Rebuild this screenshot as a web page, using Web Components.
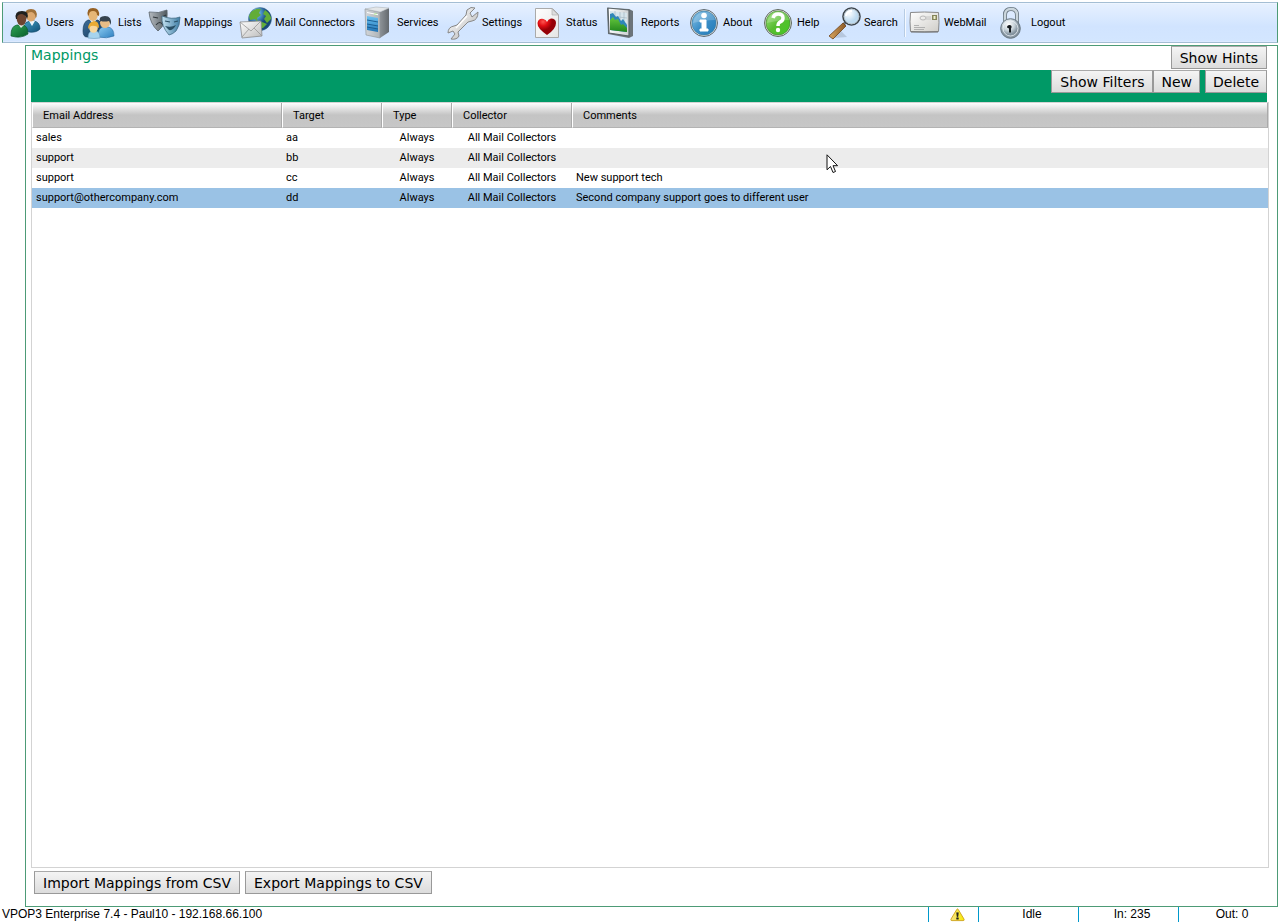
<!DOCTYPE html>
<html lang="en">
<head>
<meta charset="utf-8">
<title>VPOP3 - Mappings</title>
<style>
html, body { margin: 0; height: 100%; background: #fff; color: #000; font-family: Roboto, sans-serif; font-size: 11px; }
</style>
</head>
<body>
<vpop-app></vpop-app>

<script>
const ICONS = {
  users: `<defs><linearGradient id="a" x1="0" y1="0" x2="1" y2="1"><stop offset="0" stop-color="#3f9fc4"/><stop offset="1" stop-color="#114f76"/></linearGradient>
<linearGradient id="b" x1="0" y1="0" x2="1" y2="1"><stop offset="0" stop-color="#2fa455"/><stop offset="1" stop-color="#08602b"/></linearGradient></defs>
<path d="M13 23v-5q1-3 6-4h4q6 1 6 8-4 4-11 3z" fill="url(#a)" stroke="#164e6b" stroke-width=".7"/>
<path d="M18 14l3 5 3-5z" fill="#eef6fa"/>
<ellipse cx="20" cy="8.500" rx="5" ry="6" fill="#dda970"/>
<path d="M14.500 9Q13 2 20 2t5.500 8l-1 1q0-5-4-6-4 0-5 3z" fill="#a0713a"/>
<path d="M0 28q0-9 6-10h6q5 1 5 9-7 5-17 2z" fill="url(#b)" stroke="#0b572b" stroke-width=".7"/>
<path d="M7 17l3 4 4-4z" fill="#e2ece5"/>
<ellipse cx="10.500" cy="12" rx="4.800" ry="6.500" fill="#6d4430"/>
<path d="M5 12Q3 4 11 4t5 8q-1-4-5-5-5 0-5 5z" fill="#20201f"/>`,
  lists: `<defs><linearGradient id="a" x1="0" y1="0" x2="1" y2="1"><stop offset="0" stop-color="#3d6f9d"/><stop offset="1" stop-color="#153858"/></linearGradient>
<linearGradient id="b" x1="0" y1="0" x2="1" y2="1"><stop offset="0" stop-color="#8bcbf2"/><stop offset="1" stop-color="#2e7fc0"/></linearGradient></defs>
<path d="M0 24q0-9 5-11h10q4 2 4 8l-6 9H4q-4 0-4-6z" fill="url(#a)" stroke="#153553" stroke-width=".6"/>
<path d="M6 12l4 5 4-5z" fill="#e9eef2"/><ellipse cx="10" cy="8" rx="4.800" ry="6" fill="#e6b676"/>
<path d="M5 9Q3 1 10 1t6 8l-2-1q0-4-4-4-4 0-4 4z" fill="#956023"/>
<path d="M15 29q0-8 5-9h5q6 1 6 9-7 3-16 1z" fill="url(#b)" stroke="#286a9f" stroke-width=".6"/>
<ellipse cx="22" cy="15.500" rx="5" ry="5.500" fill="#e8bd86"/>
<path d="M17 15Q15 9 22 9t6 9l-2-4q-5 1-8 0z" fill="#36434e"/>
<path d="M5 31q0-6 4-7h4q4 1 4 7-6 1-12 0z" fill="#a6d3ee" stroke="#6a9bbd" stroke-width=".6"/>
<ellipse cx="10.500" cy="21" rx="4.300" ry="4.800" fill="#f7d69c"/>
<path d="M5 22q0-7 6-8 5 0 5 7-4-3-8-2z" fill="#e9ab35"/>`,
  mappings: `<defs><linearGradient id="a" x1="0" x2="1"><stop offset="0" stop-color="#b5babf"/><stop offset="1" stop-color="#4f595f"/></linearGradient>
<linearGradient id="b" x1="0" x2="1"><stop offset="0" stop-color="#c4e2f1"/><stop offset="1" stop-color="#3f7da5"/></linearGradient></defs>
<path d="M0 5q10 2 18-2 1 8-2 12-3 6-7 9-8-7-9-19z" fill="url(#a)" stroke="#596268" stroke-width=".8"/>
<path d="M4 10l5 1m4-1l4-2M7 18q4-5 7 0" fill="none" stroke="#30373b" stroke-width="1.200"/>
<path d="M13 9q10 4 18 1 0 9-4 14-3 3-7 4-8-9-7-19z" fill="url(#b)" stroke="#426b83" stroke-width=".8"/>
<path d="M16 14l5 1m4 0l4-1" fill="none" stroke="#294e64" stroke-width="1.200"/><path d="M16 19q6 2 11-1-3 6-7 5z" fill="#294e64"/>`,
  mail: `<defs><radialGradient id="a" cx=".3" cy=".25"><stop offset="0" stop-color="#b6e0ff"/><stop offset=".5" stop-color="#4d94cc"/><stop offset="1" stop-color="#174778"/></radialGradient>
<linearGradient id="b" x1="0" y1="0" x2="1" y2="1"><stop offset="0" stop-color="#fff"/><stop offset="1" stop-color="#bcbcbc"/></linearGradient></defs>
<circle cx="20" cy="12" r="11.500" fill="url(#a)" stroke="#376489" stroke-width=".5"/>
<path d="M11 5q5-4 10-3l-2 4 2 2-4 3 1 5-3-4-5 1-1-4zM25 3q6 4 6 9l-4 4-3-4 2-3-3-2zM17 16l5-1 5 2-4 4q-4 1-6-1z" fill="#62ad38"/>
<path d="M0 15l21-1 1 15-20 2z" fill="url(#b)" stroke="#8c8c8c" stroke-width=".8"/>
<path d="M0 15l11 9 10-10M2 30l7-8m13 7l-8-8" fill="none" stroke="#979797" stroke-width=".8"/>`,
  services: `<defs><linearGradient id="a" x1="0" x2="1"><stop offset="0" stop-color="#d3d6d9"/><stop offset="1" stop-color="#aeb3b7"/></linearGradient>
<linearGradient id="b" y1="0" y2="1" x1="0" x2="0"><stop offset="0" stop-color="#6cc4f4"/><stop offset="1" stop-color="#1f72b4"/></linearGradient>
<linearGradient id="c" x1="0" x2="1"><stop offset="0" stop-color="#8d9398"/><stop offset="1" stop-color="#63696e"/></linearGradient></defs>
<path d="M3 2l15 3v26L4 28z" fill="url(#a)" stroke="#8a9094" stroke-width=".6"/><path d="M18 5l9-4v24l-9 6z" fill="url(#c)"/><path d="M3 2l11-2 13 1-9 4z" fill="#e4e7e9" stroke="#a5aaae" stroke-width=".5"/>
<path d="M5 9l11 2v14L5 23z" fill="url(#b)"/><path d="M5 13l11 2M5 17l11 2M5 20l11 2" stroke="#15578c" stroke-width=".9"/><path d="M12 7l3 .6" stroke="#87de59" stroke-width="1.500"/><path d="M5 5.500l11 2.200" stroke="#fff" stroke-width="1"/>`,
  settings: `<defs><linearGradient id="a" x1="0" y1="0" x2="1" y2="1"><stop offset="0" stop-color="#fff"/><stop offset=".5" stop-color="#ddd"/><stop offset="1" stop-color="#a5a5a5"/></linearGradient></defs>
<path d="M20 3q4-4 8-2l-5 5 2 4 6-5q0 8-6 9l-4 1-10 10 1 4q-2 4-8 3l4-5-2-3-5 2q0-6 6-7l3-1 9-10z" fill="url(#a)" stroke="#888" stroke-linejoin="round"/><path d="M20 9L9 21" stroke="#fff" stroke-width="1.500"/>`,
  status: `<defs><linearGradient id="p" x1="0" y1="0" x2="1" y2="1"><stop offset="0" stop-color="#fff"/><stop offset="1" stop-color="#e5e5e5"/></linearGradient><radialGradient id="h" cx=".3" cy=".2"><stop offset="0" stop-color="#ff5650"/><stop offset=".5" stop-color="#e10d13"/><stop offset="1" stop-color="#960006"/></radialGradient></defs>
<path d="M4.500 1.500h17l6 6v23h-23z" fill="url(#p)" stroke="#aaa"/><path d="M21 2v6h6z" fill="#ddd" stroke="#aaa" stroke-width=".6"/>
<path d="M16 28Q6 21 6.500 16q1-5 6-4 3 1 3.500 3 1-3 4-3.500 5 0 5 4.500 0 6-9 12z" fill="url(#h)"/>`,
  reports: `<defs><linearGradient id="a" x1="0" x2="1"><stop offset="0" stop-color="#fff"/><stop offset="1" stop-color="#ccd0d3"/></linearGradient><linearGradient id="g" x1="0" y1="0" x2="0" y2="1"><stop offset="0" stop-color="#65c73d"/><stop offset="1" stop-color="#21861d"/></linearGradient></defs>
<path d="M1 1l22 1 4 2v25l-4 2L2 27z" fill="#6c747a"/><path d="M2 1l21 2v26L3 26z" fill="url(#a)" stroke="#5c6468" stroke-width="1.200"/>
<path d="M4 4l17 2v19L4 23z" fill="#d5e4ec"/><path d="M9 4v19M14 5v19M18 5v20M4 9l17 2M4 15l17 2" stroke="#9db0bc" stroke-width=".6"/>
<path d="M4 7l3-1 3 4 2-1 3 5 2-2 4 6v7L4 23z" fill="#2f86b8"/><path d="M4 13l3-3 2 3 3-1 3 6 2-1 4 4v4L4 23z" fill="url(#g)"/>`,
  about: `<defs><linearGradient id="a" x1="0" y1="0" x2="1" y2="1"><stop offset="0" stop-color="#8fc8ea"/><stop offset=".5" stop-color="#3c8fc8"/><stop offset="1" stop-color="#237bb9"/></linearGradient></defs>
<circle cx="16" cy="16" r="13.500" fill="#d8dddf" stroke="#606b72"/><circle cx="16" cy="16" r="12" fill="url(#a)" stroke="#38779e" stroke-width=".6"/><path d="M5 16q2-10 11-11t11 8q-10 0-22 3z" fill="#fff" opacity=".2"/>
<circle cx="16" cy="8.500" r="2.800" fill="#fff"/><path d="M12 13h6v9h2v2h-8v-2h2v-7h-2z" fill="#fff" stroke="#fff"/>`,
  help: `<defs><linearGradient id="a" x1="0" y1="0" x2="1" y2="1"><stop offset="0" stop-color="#a5e382"/><stop offset=".5" stop-color="#57bd31"/><stop offset="1" stop-color="#44ca22"/></linearGradient></defs>
<circle cx="16" cy="16" r="13.500" fill="#dbe0d8" stroke="#606960"/><circle cx="16" cy="16" r="12" fill="url(#a)" stroke="#427f32" stroke-width=".6"/><path d="M5 16q2-10 11-11t11 8q-10 0-22 3z" fill="#fff" opacity=".2"/>
<path d="M11 11q1-4 5-4 5 0 5 4 0 3-3 4-2 1-2 4" fill="none" stroke="#fff" stroke-width="3.500"/><circle cx="16" cy="23" r="2.200" fill="#fff"/>`,
  search: `<defs><radialGradient id="a" cx=".35" cy=".3"><stop offset="0" stop-color="#fff"/><stop offset="1" stop-color="#bddaf0"/></radialGradient><linearGradient id="h"><stop offset="0" stop-color="#d9a660"/><stop offset="1" stop-color="#8a5824"/></linearGradient></defs>
<path d="M5 31l13-1-6-6z" fill="#8c9bad" opacity=".4"/><path d="M18 14l-4 4" stroke="#777" stroke-width="3"/><path d="M14 16l3 3L4 32l-4-3z" fill="url(#h)" stroke="#6f4219" stroke-width=".8"/>
<circle cx="22.500" cy="9.500" r="8.500" fill="url(#a)" stroke="#3b434a" stroke-width="1.600"/><circle cx="22.500" cy="9.500" r="7.400" fill="none" stroke="#b5c0c8"/><path d="M17 9q1-5 6-5" fill="none" stroke="#fff" stroke-width="2"/>`,
  webmail: `<defs><linearGradient id="a" x1="0" y1="0" x2="1" y2="1"><stop offset="0" stop-color="#fff"/><stop offset="1" stop-color="#cfcdc8"/></linearGradient></defs>
<path d="M1.500 5.500q14-1 28 0 1 10 0 19-14 1-28 0-1-10 0-19z" fill="url(#a)" stroke="#888"/><path d="M2 25h27" stroke="#6f6f6f"/>
<ellipse cx="14" cy="11" rx="3" ry="2" fill="none" stroke="#aaa" stroke-width=".8"/><path d="M17 10h5m-5 2h5" stroke="#bbb" stroke-width=".8"/><path d="M23 8h5v5h-5z" fill="#85855a"/><path d="M24.500 9h2v3h-2z" fill="#efefd0"/><path d="M5 18.500h5m-5 2h11m-11 2h10" stroke="#aaa" stroke-width=".9"/>`,
  logout: `<defs><radialGradient id="a" cx=".4" cy=".3"><stop offset="0" stop-color="#fff"/><stop offset=".6" stop-color="#c8d3da"/><stop offset="1" stop-color="#84939f"/></radialGradient></defs>
<path d="M9 18V8q0-6 6-6t6 6v10" fill="none" stroke="#687681" stroke-width="4"/><path d="M9 17V8q0-6 6-6t6 6v9" fill="none" stroke="#cbd6dd" stroke-width="2.400"/>
<circle cx="14.500" cy="21.500" r="9.800" fill="url(#a)" stroke="#6a7883"/><circle cx="14.500" cy="21.500" r="7.500" fill="none" stroke="#eef3f7" stroke-width=".8"/><path d="M11 20.500q0-2.500 2.500-2.500t2 2.500l-.5 1v4h-2v-4z" fill="#14181c"/>`,
  warning: `<defs><linearGradient id="a"><stop offset="0" stop-color="#f6e28a"/><stop offset="1" stop-color="#f8ec00"/></linearGradient></defs>
<path d="M16 4q1 0 2 2l12 20q1 3-2 3H4q-3 0-2-3L14 6q1-2 2-2z" fill="url(#a)" stroke="#cfa41e" stroke-width="2"/><path d="M14 12h4l-1 9h-2zM14 23h4v3h-4z" fill="#222" stroke="#222"/>`
};

class VpopIcon extends HTMLElement {
  connectedCallback() {
    this.attachShadow({ mode: 'open' }).innerHTML = `
      <style>:host { display: block; flex: none; width: var(--icon-size, 32px); height: var(--icon-size, 32px); } svg { display: block; width: 100%; height: 100%; overflow: visible; }</style>
      <svg viewBox="0 0 32 32" aria-hidden="true">${ICONS[this.getAttribute('name')]}</svg>`;
  }
}
customElements.define('vpop-icon', VpopIcon);

class VpopTool extends HTMLElement {
  connectedCallback() {
    this.attachShadow({ mode: 'open' }).innerHTML = `
      <style>
        :host { display: block; flex: none; }
        button { display: flex; align-items: center; gap: 3px; margin: 0; padding: 0; border: 0; background: none; color: #000; font: inherit; line-height: 16px; text-align: left; white-space: nowrap; }
        span { width: var(--label); }
      </style>
      <button type="button"><vpop-icon name="${this.getAttribute('icon')}"></vpop-icon><span><slot></slot></span></button>`;
  }
}
customElements.define('vpop-tool', VpopTool);

class VpopToolbar extends HTMLElement {
  connectedCallback() {
    this.attachShadow({ mode: 'open' }).innerHTML = `
      <style>
        :host { display: block; }
        nav { display: flex; align-items: center; gap: 10px; height: 39px; padding-left: 8px; border: 1px solid #a4bed4; border-left-color: #4d9b76; border-right-color: #4d9b76; background: linear-gradient(#e7f1ff, #d1e4ff 60%, #d3e6ff); box-shadow: inset 0 1px #eef5ff, inset 0 -1px #dceaff; }
      </style>
      <nav aria-label="Main"><slot></slot></nav>`;
  }
}
customElements.define('vpop-toolbar', VpopToolbar);

class VpopButton extends HTMLElement {
  connectedCallback() {
    this.attachShadow({ mode: 'open' }).innerHTML = `
      <style>
        :host { display: block; }
        button { display: block; box-sizing: border-box; height: 23px; margin: 0; padding: 0 8px; border: 1px solid #999; border-top-color: #a9a9a9; border-radius: 0; background: linear-gradient(#f4f4f4, #dcdcdc); color: #000; font: 14px/20px "DejaVu Sans", sans-serif; white-space: nowrap; }
        :host([compact]) button { padding: 0 7px; }
      </style>
      <button type="button"><slot></slot></button>`;
  }
}
customElements.define('vpop-button', VpopButton);

class MappingGrid extends HTMLElement {
  connectedCallback() {
    const rows = [
      ['sales', 'aa', 'Always', 'All Mail Collectors', ''],
      ['support', 'bb', 'Always', 'All Mail Collectors', ''],
      ['support', 'cc', 'Always', 'All Mail Collectors', 'New support tech'],
      ['support@othercompany.com', 'dd', 'Always', 'All Mail Collectors', 'Second company support goes to different user']
    ];
    this.attachShadow({ mode: 'open' }).innerHTML = `
      <style>
        :host { display: block; box-sizing: border-box; border: 1px solid #d3d3d3; }
        table { width: 100%; border-collapse: separate; border-spacing: 0; table-layout: fixed; line-height: 16px; }
        th { box-sizing: border-box; height: 25px; padding: 2px 0 0 10px; border-left: 1px solid #fff; border-right: 1px solid #aaa; border-bottom: 1px solid #b3b3b3; background: linear-gradient(#fdfdfd, #c4c4c4 50%, #c7c7c7); font-weight: normal; text-align: left; }
        td { height: 20px; box-sizing: border-box; padding: 0 4px; white-space: nowrap; }
        td:nth-child(3), td:nth-child(4) { text-align: center; }
        tr:nth-child(even) td { background: #ececec; }
        tr[aria-selected] td { background: #9ac2e5; }
      </style>
      <table>
        <colgroup><col style="width:250px"><col style="width:100px"><col style="width:70px"><col style="width:120px"><col></colgroup>
        <thead><tr><th>Email Address</th><th>Target</th><th>Type</th><th>Collector</th><th>Comments</th></tr></thead>
        <tbody>${rows.map((r, i) => `<tr${i === 3 ? ' aria-selected="true"' : ''}>${r.map(c => `<td>${c}</td>`).join('')}</tr>`).join('')}</tbody>
      </table>`;
  }
}
customElements.define('mapping-grid', MappingGrid);

class VpopPanel extends HTMLElement {
  connectedCallback() {
    this.attachShadow({ mode: 'open' }).innerHTML = `
      <style>
        :host { display: flex; flex-direction: column; box-sizing: border-box; border: 1px solid #4d9b76; padding: 0 8px 0 5px; }
        header { display: flex; justify-content: space-between; height: 24px; padding-right: 2px; }
        h1 { margin: 0; color: #009966; font: 14px/18px "DejaVu Sans", sans-serif; }
        .bar { display: flex; justify-content: flex-end; align-items: flex-start; height: 32px; margin-right: 2px; background: #009966; }
        .bar vpop-button:last-child { margin-left: 5px; }
        mapping-grid { flex: 1; }
        footer { display: flex; gap: 5px; padding: 3px 3px 12px; }
      </style>
      <header><h1>Mappings</h1><vpop-button>Show Hints</vpop-button></header>
      <div class="bar"><vpop-button>Show Filters</vpop-button><vpop-button compact>New</vpop-button><vpop-button compact>Delete</vpop-button></div>
      <mapping-grid></mapping-grid>
      <footer><vpop-button>Import Mappings from CSV</vpop-button><vpop-button>Export Mappings to CSV</vpop-button></footer>`;
  }
}
customElements.define('vpop-panel', VpopPanel);

class VpopStatus extends HTMLElement {
  connectedCallback() {
    this.attachShadow({ mode: 'open' }).innerHTML = `
      <style>
        :host { display: flex; height: 15px; padding-left: 2px; font: 12px/15px "Liberation Sans", sans-serif; }
        .product { flex: 1; }
        .cell { box-sizing: border-box; width: 100px; border-left: 1px solid #0099cc; text-align: center; padding-left: 7px; }
        .alert { width: 50px; display: flex; justify-content: center; --icon-size: 15px; }
      </style>
      <span class="product">VPOP3 Enterprise 7.4 - Paul10 - 192.168.66.100</span>
      <span class="cell alert"><vpop-icon name="warning"></vpop-icon></span>
      <span class="cell">Idle</span><span class="cell">In: 235</span><span class="cell">Out: 0</span>`;
  }
}
customElements.define('vpop-status', VpopStatus);

class VpopApp extends HTMLElement {
  connectedCallback() {
    this.attachShadow({ mode: 'open' }).innerHTML = `
      <style>
        :host { position: relative; display: flex; flex-direction: column; box-sizing: border-box; min-height: 100vh; padding-top: 2px; }
        vpop-toolbar { margin: 0 2px 2px; }
        vpop-panel { flex: 1; margin: 0 2px 0 25px; }
        vpop-status { margin-right: 2px; }
        .divider { width: 1px; height: 28px; margin: 0 -6px 0 -2px; background: #b7cce4; box-shadow: 1px 0 #f5f9ff; }
        .pointer { position: absolute; left: 826px; top: 154px; width: 13px; height: 20px; }
      </style>
      <vpop-toolbar>
        <vpop-tool icon="users" style="--label:27px">Users</vpop-tool>
        <vpop-tool icon="lists" style="--label:21px">Lists</vpop-tool>
        <vpop-tool icon="mappings" style="--label:46px">Mappings</vpop-tool>
        <vpop-tool icon="mail" style="--label:77px">Mail Connectors</vpop-tool>
        <vpop-tool icon="services" style="--label:40px">Services</vpop-tool>
        <vpop-tool icon="settings" style="--label:39px">Settings</vpop-tool>
        <vpop-tool icon="status" style="--label:30px">Status</vpop-tool>
        <vpop-tool icon="reports" style="--label:37px">Reports</vpop-tool>
        <vpop-tool icon="about" style="--label:29px">About</vpop-tool>
        <vpop-tool icon="help" style="--label:22px">Help</vpop-tool>
        <vpop-tool icon="search" style="--label:32px">Search</vpop-tool>
        <div class="divider"></div>
        <vpop-tool icon="webmail" style="--label:42px">WebMail</vpop-tool>
        <vpop-tool icon="logout" style="--label:33px">Logout</vpop-tool>
      </vpop-toolbar>
      <vpop-panel></vpop-panel>
      <vpop-status></vpop-status>
      <svg class="pointer" viewBox="0 0 13 20" aria-hidden="true"><path d="M1 .8v15l3.500-3.300 2.500 6 2.500-1-2.500-5.800h4.600z" fill="#fff" stroke="#111" stroke-linejoin="round"/></svg>`;
  }
}
customElements.define('vpop-app', VpopApp);
</script>
</body>
</html>
